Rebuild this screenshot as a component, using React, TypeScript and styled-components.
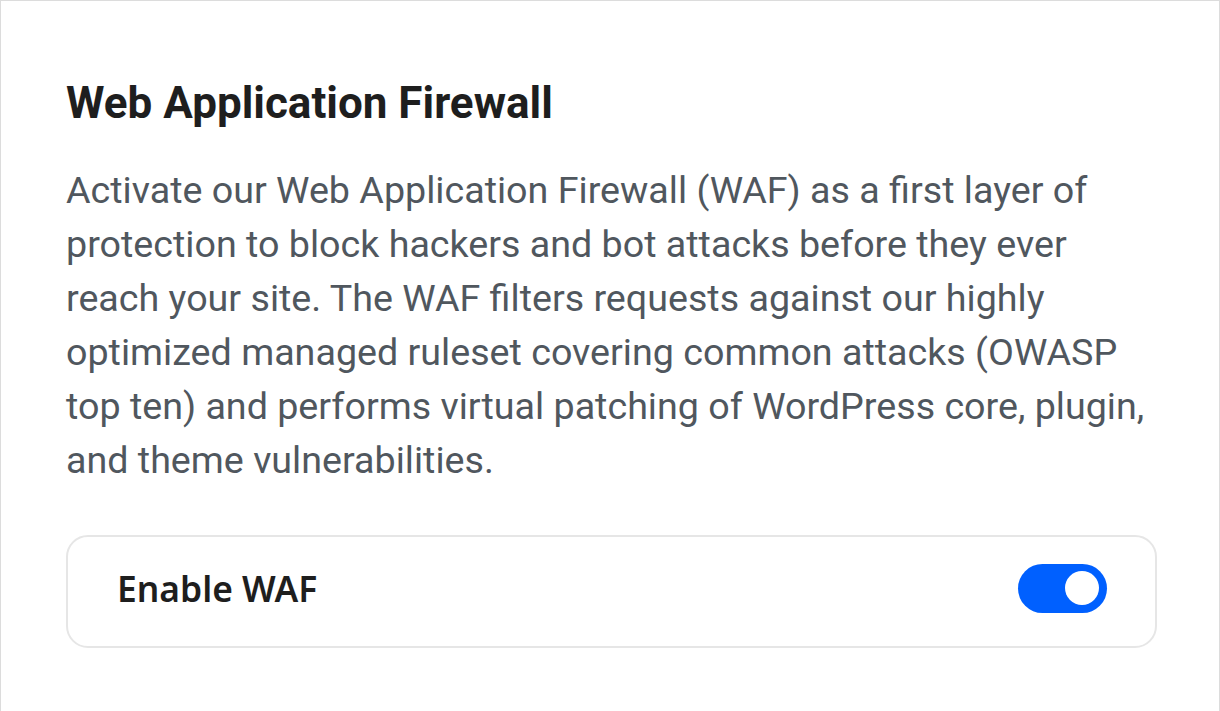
import React from "react";
import styled, { createGlobalStyle } from "styled-components";

const Global = createGlobalStyle`
  html, body { margin: 0; padding: 0; background: #ffffff; }
  body { font-family: Roboto, "Liberation Sans", sans-serif; }
`;

const Frame = styled.div`
  box-sizing: border-box;
  width: 1220px;
  height: 711px;
  border: 1px solid #dcdcdc;
  border-bottom: none;
  padding: 76px 63px 0 65px;
  background: #fff;
`;

const Title = styled.h2`
  margin: 0;
  font-family: Roboto, sans-serif;
  font-weight: 700;
  font-size: 44px;
  line-height: 52px;
  color: #1e1e1e;
  white-space: nowrap;
`;

const Description = styled.p`
  margin: 34px 0 0;
  font-family: Roboto, sans-serif;
  font-weight: 400;
  font-size: 37.65px;
  line-height: 54px;
  color: #50575e;
`;

const Card = styled.div`
  box-sizing: border-box;
  margin-top: 48px;
  width: 1091px;
  height: 113px;
  border: 2px solid #e6e6e6;
  border-radius: 22px;
  display: flex;
  align-items: center;
  justify-content: space-between;
  padding: 0 48px 7px 49px;
`;

const Label = styled.span`
  font-family: "Noto Sans", sans-serif;
  font-weight: 600;
  font-size: 35.4px;
  color: #1e1e1e;
`;

const Toggle = styled.button<{ $on: boolean }>`
  box-sizing: border-box;
  width: 89px;
  height: 49px;
  border: none;
  border-radius: 25px;
  padding: 0 8px;
  display: flex;
  align-items: center;
  justify-content: ${(p) => (p.$on ? "flex-end" : "flex-start")};
  background: ${(p) => (p.$on ? "#0060ff" : "#cccccc")};
  cursor: pointer;
`;

const Knob = styled.span`
  width: 34px;
  height: 34px;
  border-radius: 50%;
  background: #fff;
`;

export default function App() {
  const [on, setOn] = React.useState(true);
  return (
    <>
      <Global />
      <Frame>
        <Title>Web Application Firewall</Title>
        <Description>
          Activate our Web Application Firewall (WAF) as a first layer of protection to block hackers and bot attacks
          before they ever reach your site. The WAF filters requests against our highly optimized managed ruleset
          covering common attacks (OWASP top ten) and performs virtual patching of WordPress core, plugin, and theme
          vulnerabilities.
        </Description>
        <Card>
          <Label>Enable WAF</Label>
          <Toggle $on={on} onClick={() => setOn(!on)} aria-label="Enable WAF">
            <Knob />
          </Toggle>
        </Card>
      </Frame>
    </>
  );
}
